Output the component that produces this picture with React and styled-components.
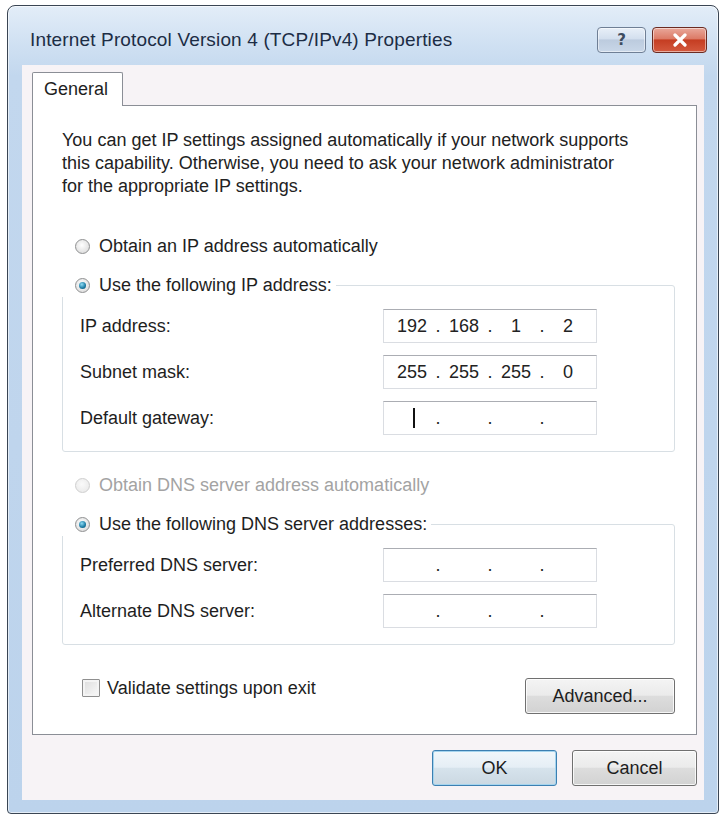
import React from 'react';
import styled, { createGlobalStyle } from 'styled-components';

const GlobalStyle = createGlobalStyle`
  body {
    margin: 0;
    background: #ffffff;
    font-family: "Liberation Sans", Arial, sans-serif;
  }
`;

const ipRows = [
  { label: 'IP address:', value: ['192', '168', '1', '2'] },
  { label: 'Subnet mask:', value: ['255', '255', '255', '0'] },
  { label: 'Default gateway:', value: null, caret: true },
];

const dnsRows = [
  { label: 'Preferred DNS server:', value: null },
  { label: 'Alternate DNS server:', value: null },
];

export default function App() {
  return (
    <>
      <GlobalStyle />
      <Window>
        <TitleBar>
          <Title>Internet Protocol Version 4 (TCP/IPv4) Properties</Title>
          <CaptionButtons>
            <CaptionButton kind="help">?</CaptionButton>
            <CaptionButton kind="close">
              <svg width="16" height="14" viewBox="0 0 16 14">
                <path d="M3 2 L13 12 M13 2 L3 12" stroke="#fff" strokeWidth="3.2" strokeLinecap="round" />
              </svg>
            </CaptionButton>
          </CaptionButtons>
        </TitleBar>

        <Client>
          <TabStrip>
            <Tab>General</Tab>
          </TabStrip>
          <Panel>
            <Intro>
              You can get IP settings assigned automatically if your network supports
              <br />
              this capability. Otherwise, you need to ask your network administrator
              <br />
              for the appropriate IP settings.
            </Intro>

            <RadioRow>
              <Radio />
              Obtain an IP address automatically
            </RadioRow>
            <Group>
              <Legend>
                <RadioRow as="span">
                  <Radio checked />
                  Use the following IP address:
                </RadioRow>
              </Legend>
              <Fields>
                {ipRows.map((r) => (
                  <FieldRow key={r.label}>
                    <FieldLabel>{r.label}</FieldLabel>
                    <IpInput value={r.value} caret={r.caret} />
                  </FieldRow>
                ))}
              </Fields>
            </Group>

            <RadioRow disabled style={{ marginTop: 21 }}>
              <Radio disabled />
              Obtain DNS server address automatically
            </RadioRow>
            <Group>
              <Legend>
                <RadioRow as="span">
                  <Radio checked />
                  Use the following DNS server addresses:
                </RadioRow>
              </Legend>
              <Fields>
                {dnsRows.map((r) => (
                  <FieldRow key={r.label}>
                    <FieldLabel>{r.label}</FieldLabel>
                    <IpInput value={r.value} />
                  </FieldRow>
                ))}
              </Fields>
            </Group>

            <BottomRow>
              <CheckRow>
                <CheckBox />
                Validate settings upon exit
              </CheckRow>
              <Button width={150}>Advanced...</Button>
            </BottomRow>
          </Panel>

          <Footer>
            <Button width={125} primary>OK</Button>
            <Button width={125}>Cancel</Button>
          </Footer>
        </Client>
      </Window>
    </>
  );
}

function IpInput({ value, caret }) {
  const parts = value || ['', '', '', ''];
  return (
    <IpBox>
      {parts.map((p, i) => (
        <React.Fragment key={i}>
          <Octet>{i === 0 && caret ? <Caret /> : p}</Octet>
          {i < 3 && <Dot>.</Dot>}
        </React.Fragment>
      ))}
    </IpBox>
  );
}

const Window = styled.div`
  margin: 5px 0 0 7px;
  width: 710px;
  height: 807px;
  border: 1px solid #3a4553;
  border-radius: 8px 8px 4px 4px;
  background: linear-gradient(180deg, #e3edf8 0px, #cfe0f2 40px, #c2d7ee 70px, #bcd3ec 100%);
  box-shadow: inset 0 0 0 1px rgba(255, 255, 255, 0.6);
  display: flex;
  flex-direction: column;
`;

const TitleBar = styled.div`
  height: 59px;
  display: flex;
  align-items: center;
  justify-content: space-between;
  padding: 0 11px 0 22px;
`;

const Title = styled.div`
  font-size: 19px;
  color: #1c2d45;
  letter-spacing: 0.15px;
  margin-top: 8px;
`;

const CaptionButtons = styled.div`
  display: flex;
  gap: 6px;
  margin-top: 8px;
`;

const CaptionButton = styled.div`
  width: ${(p) => (p.kind === 'close' ? 53 : 47)}px;
  height: 24px;
  border-radius: 4px;
  display: flex;
  align-items: center;
  justify-content: center;
  font-family: "DejaVu Sans", sans-serif;
  font-size: 15px;
  font-weight: bold;
  color: #3d4c60;
  border: 1px solid ${(p) => (p.kind === 'close' ? '#6b2b22' : '#6f7f95')};
  background: ${(p) =>
    p.kind === 'close'
      ? 'linear-gradient(180deg, #e9a89b 0%, #dc7a66 45%, #c53d22 50%, #d4593e 100%)'
      : 'linear-gradient(180deg, #e8eff8 0%, #d3dfee 45%, #bccbde 50%, #c9d7e8 100%)'};
  box-shadow: inset 0 0 0 1px rgba(255, 255, 255, 0.5);
`;

const Client = styled.div`
  flex: 1;
  margin: 0 14px 13px;
  background: #f7f3f6;
  padding: 7px 7px 0 10px;
  display: flex;
  flex-direction: column;
`;

const TabStrip = styled.div`
  display: flex;
  height: 33px;
  position: relative;
  z-index: 1;
`;

const Tab = styled.div`
  width: 91px;
  height: 34px;
  box-sizing: border-box;
  border: 1px solid #8b8e96;
  border-bottom: none;
  border-radius: 2px 2px 0 0;
  background: #ffffff;
  font-size: 18px;
  color: #1e1e1e;
  padding: 6px 0 0 11px;
`;

const Panel = styled.div`
  height: 630px;
  box-sizing: border-box;
  border: 1px solid #8b8e96;
  background: #ffffff;
  padding: 23px 21px 0 29px;
  display: flex;
  flex-direction: column;
`;

const Intro = styled.p`
  margin: 0 0 36px;
  font-size: 18px;
  line-height: 23px;
  color: #222222;
  white-space: nowrap;
`;

const RadioRow = styled.div`
  display: flex;
  align-items: center;
  gap: 9px;
  height: 24px;
  padding-left: 13px;
  font-size: 18px;
  color: ${(p) => (p.disabled ? '#a3a3a3' : '#1e1e1e')};
  & + & {
    margin-top: 15px;
  }
`;

const Radio = styled.span`
  width: 13px;
  height: 13px;
  border-radius: 50%;
  flex: none;
  border: 1px solid ${(p) => (p.disabled ? '#cfcfcf' : '#8f9091')};
  background: ${(p) => (p.disabled ? 'radial-gradient(circle at 45% 40%, #fafafa, #e6e6e6)' : 'radial-gradient(circle at 45% 40%, #ffffff, #d4d4d4)')};
  display: flex;
  align-items: center;
  justify-content: center;
  &::after {
    content: '';
    display: ${(p) => (p.checked ? 'block' : 'none')};
    width: 7px;
    height: 7px;
    border-radius: 50%;
    background: radial-gradient(circle at 40% 35%, #8fdcf4, #1a7aa3 60%, #0b4a66);
  }
`;

const Group = styled.fieldset`
  margin: 15px 0 0;
  padding: 12px 0 16px 17px;
  border: 1px solid #d8dfe4;
  border-radius: 3px;
  min-width: 0;
`;

const Legend = styled.legend`
  padding: 0 4px 0 0;
  margin-left: -18px;
`;

const Fields = styled.div`
  display: flex;
  flex-direction: column;
  gap: 12px;
`;

const FieldRow = styled.div`
  display: grid;
  grid-template-columns: 303px 214px;
  align-items: center;
`;

const FieldLabel = styled.span`
  font-size: 18px;
  color: #1e1e1e;
`;

const IpBox = styled.div`
  height: 34px;
  box-sizing: border-box;
  border: 1px solid #dadde2;
  border-top-color: #abadb3;
  background: #ffffff;
  display: flex;
  align-items: center;
  padding-left: 5px;
  font-size: 18px;
  color: #222222;
`;

const Octet = styled.span`
  width: 46px;
  text-align: center;
  display: flex;
  justify-content: center;
  align-items: center;
`;

const Dot = styled.span`
  width: 6px;
  text-align: center;
`;

const Caret = styled.span`
  width: 2px;
  height: 20px;
  background: #111111;
  margin-left: 4px;
`;

const BottomRow = styled.div`
  margin-top: 31px;
  display: flex;
  justify-content: space-between;
  align-items: flex-start;
`;

const CheckRow = styled.div`
  display: flex;
  align-items: center;
  gap: 7px;
  height: 24px;
  padding-left: 20px;
  font-size: 18px;
  color: #1e1e1e;
`;

const CheckBox = styled.span`
  width: 18px;
  height: 18px;
  box-sizing: border-box;
  border: 1px solid #8f8f8f;
  border-radius: 1px;
  background: linear-gradient(135deg, #dcdcdc, #fafafa);
  box-shadow: inset 0 0 0 2px #f4f4f4;
`;

const Button = styled.div`
  width: ${(p) => p.width}px;
  height: 36px;
  box-sizing: border-box;
  margin-top: 2px;
  border-radius: 3px;
  border: 1px solid ${(p) => (p.primary ? '#3c7fb1' : '#707070')};
  background: ${(p) =>
    p.primary
      ? 'linear-gradient(180deg, #f1f7fb 0%, #e5eef5 48%, #d6e3ec 50%, #cbd8e2 100%)'
      : 'linear-gradient(180deg, #f4f4f4 0%, #ebebeb 48%, #dddddd 50%, #d2d2d2 100%)'};
  box-shadow: inset 0 0 0 1px ${(p) => (p.primary ? '#a5d4ee' : 'rgba(255,255,255,0.8)')};
  display: flex;
  align-items: center;
  justify-content: center;
  font-size: 18px;
  color: #1e1e1e;
`;

const Footer = styled.div`
  display: flex;
  justify-content: flex-end;
  gap: 15px;
  padding-top: 13px;
  padding-right: 0;
`;
